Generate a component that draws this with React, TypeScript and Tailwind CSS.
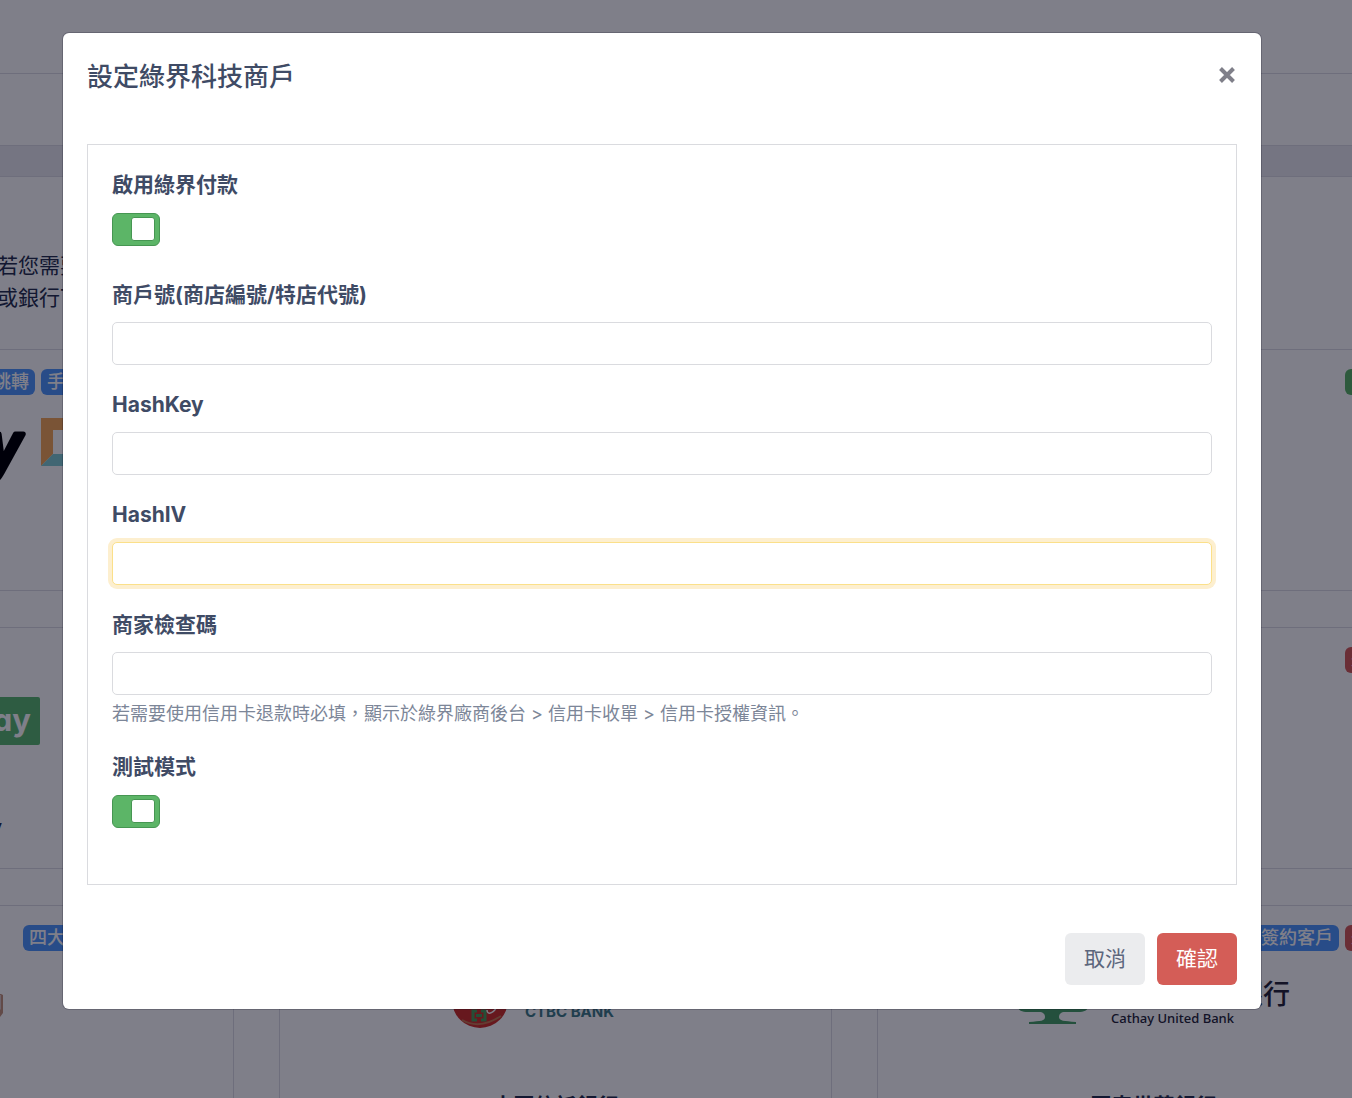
import type { ReactNode } from "react";

const badgeColors = {
  blue: "bg-[#5098fc]",
  green: "bg-[#5cb567]",
  red: "bg-[#d45c58]",
};

type Tag = { text: string; color: keyof typeof badgeColors };

type Provider = { name: string; tags: Tag[]; logo?: ReactNode };

function PayLogo() {
  return (
    <svg width="300" height="76" viewBox="0 0 300 76" aria-hidden="true">
      <text
        x="212"
        y="60"
        textAnchor="end"
        fontSize="64"
        fontWeight="600"
        fontStyle="italic"
        fontFamily="Open Sans, sans-serif"
        fill="#000"
        stroke="#000"
        strokeWidth="5"
        strokeLinejoin="round"
      >
        Pay
      </text>
      <path d="M233 10h48v12h-36v24l-12 12z" fill="#f4a858" />
      <path d="M233 58l12-12h36v12z" fill="#82cdd2" />
    </svg>
  );
}

function GreenPayLogo() {
  return (
    <svg width="164" height="70" viewBox="0 0 164 70" aria-hidden="true">
      <rect y="11" width="164" height="48" rx="2" fill="#5cb970" />
      <text
        x="155"
        y="45"
        textAnchor="end"
        fontSize="31"
        fontWeight="700"
        fontFamily="Inter, sans-serif"
        style={{ fontFeatureSettings: "'cv11'" }}
        fill="#fff"
      >
        Pay
      </text>
    </svg>
  );
}

function StoreLogo() {
  return (
    <svg width="90" height="70" viewBox="0 0 90 70" aria-hidden="true">
      <path d="M0 30h88l2 1v18l-3 4H0z" fill="#c4947c" />
      <path d="M0 31h88v14l-3 3H0z" fill="#d8c4c0" />
    </svg>
  );
}

function CtbcLogo() {
  return (
    <svg width="208" height="70" viewBox="0 0 208 70" aria-hidden="true">
      <circle cx="28" cy="36" r="28" fill="#ce3028" />
      <path d="M10 56q18 10 39-4" fill="none" stroke="#c87850" strokeWidth="2" />
      <path
        d="M25 47h-4v9h4M29 47h4v9h-4M24 51.500h6"
        fill="none"
        stroke="#4a9c5a"
        strokeWidth="3"
      />
      <path d="M35 46c0 6 8 3 11-6" fill="none" stroke="#fff" strokeWidth="1.500" />
      <text
        x="73"
        y="53"
        fontSize="15"
        fontWeight="700"
        fontFamily="Inter, sans-serif"
        fill="#407c88"
      >
        CTBC BANK
      </text>
    </svg>
  );
}

function CathayLogo() {
  return (
    <svg width="272" height="70" viewBox="0 0 272 70" aria-hidden="true">
      <path
        d="M35 8c18 0 35 16 35 35 0 3-4 5-10 5H47c-4 0-6 2-6 5 0 4 5 4 17 5v2H11v-2c12-1 16-1 16-5 0-3-2-5-6-5H10C4 48 0 46 0 43 0 24 16 8 35 8z"
        fill="#48a066"
      />
      <text
        x="272"
        y="40"
        textAnchor="end"
        fontSize="27"
        fontWeight="500"
        fontFamily="Noto Sans CJK TC, sans-serif"
        fill="#262638"
      >
        國泰世華銀行
      </text>
      <text
        x="93"
        y="59"
        fontSize="13"
        fontWeight="500"
        fontFamily="Noto Sans, sans-serif"
        fill="#262638"
      >
        Cathay United Bank
      </text>
    </svg>
  );
}

const providers: Provider[] = [
  {
    name: "歐付寶",
    tags: [
      { text: "網頁跳轉", color: "blue" },
      { text: "手機可跳轉", color: "blue" },
      { text: "已啟用", color: "green" },
    ],
    logo: <PayLogo />,
  },
  { name: "街口支付", tags: [{ text: "已啟用", color: "green" }] },
  { name: "藍新金流", tags: [{ text: "已啟用", color: "green" }] },
  { name: "LINE Pay", tags: [{ text: "未啟用", color: "red" }], logo: <GreenPayLogo /> },
  { name: "悠遊付", tags: [{ text: "未啟用", color: "red" }] },
  { name: "綠界科技", tags: [{ text: "未啟用", color: "red" }] },
  {
    name: "超商代收",
    tags: [
      { text: "四大超商代收", color: "blue" },
      { text: "未啟用", color: "red" },
    ],
    logo: <StoreLogo />,
  },
  { name: "中國信託銀行", tags: [{ text: "未啟用", color: "red" }], logo: <CtbcLogo /> },
  {
    name: "國泰世華銀行",
    tags: [
      { text: "需簽約客戶", color: "blue" },
      { text: "未啟用", color: "red" },
    ],
    logo: <CathayLogo />,
  },
];

function ProviderCard({ name, tags, logo }: Provider) {
  return (
    <div className="flex h-[242px] flex-col items-center border border-[#dcdde4] px-[18px] pt-[19px]">
      <div className="flex w-full justify-end gap-1.5">
        {tags.map((tag) => (
          <span
            key={tag.text}
            className={`h-[26px] shrink-0 rounded-md px-1.5 text-lg leading-[26px] font-medium text-white ${badgeColors[tag.color]}`}
          >
            {tag.text}
          </span>
        ))}
      </div>
      <div className="mt-[13px] h-[70px]">{logo}</div>
      <h3 className="mt-14 text-[21px] leading-8 font-semibold">{name}</h3>
    </div>
  );
}

function PageBehind() {
  return (
    <div className="-mr-[78px] -ml-[319px] text-[21px] leading-8 text-[#26304e]">
      <div className="h-[74px] border-b border-[#dcdde4]" />
      <div className="h-[72px] border-b border-[#dcdde4]" />
      <div className="h-[31px] border-b border-[#dcdde4] bg-[#eaeaf0]" />
      <p className="pt-[73px] pb-[35px] pl-[316px]">
        若您需要申請金流服務，
        <br />
        或銀行TSP服務，請洽客服人員。
      </p>
      <div className="grid grid-cols-3 gap-x-[45px] gap-y-9">
        {providers.map((provider) => (
          <ProviderCard key={provider.name} {...provider} />
        ))}
      </div>
    </div>
  );
}

function Switch({ id, label }: { id: string; label: string }) {
  return (
    <div className="flex flex-col items-start gap-3">
      <label htmlFor={id} className="text-[21px] leading-8 font-bold">
        {label}
      </label>
      <input
        id={id}
        type="checkbox"
        role="switch"
        defaultChecked
        className="h-[33px] w-12 appearance-none rounded-md border border-[#469652] bg-[#ebecee] before:mt-[3px] before:block before:size-6 before:rounded-[3px] before:border before:border-[#469652] before:bg-white before:content-[''] checked:bg-[#5cb567] checked:before:ml-[18px]"
      />
    </div>
  );
}

type FieldProps = { id: string; label: string; hint?: string; active?: boolean };

function Field({ id, label, hint, active }: FieldProps) {
  return (
    <div>
      <label htmlFor={id} className="block text-[21px] leading-8 font-bold">
        {label}
      </label>
      <input
        id={id}
        type="text"
        aria-describedby={hint ? `${id}-hint` : undefined}
        className={`mt-[11px] block h-[43px] w-full rounded-[5px] border bg-white px-3 text-[21px] outline-none ${
          active ? "border-[#fbe08a] ring-4 ring-[#fdefcf]" : "border-[#dadbdf]"
        }`}
      />
      {hint && (
        <p id={`${id}-hint`} className="mt-1.5 text-lg leading-[26px] text-[#7c8698]">
          {hint}
        </p>
      )}
    </div>
  );
}

export default function App() {
  return (
    <div className="relative h-screen overflow-hidden bg-white font-['Inter','Noto_Sans_CJK_TC',sans-serif]">
      <PageBehind />

      <div className="absolute inset-0 overflow-hidden bg-[#000014]/50 pt-[33px] pr-[91px] pl-[63px]">
        <div
          role="dialog"
          aria-modal="true"
          aria-labelledby="dialog-title"
          className="rounded-md bg-white p-6 text-[#3f4b65] ring-1 ring-[#000014]/20"
        >
          <div className="flex items-start justify-between">
            <h2 id="dialog-title" className="text-[26px] leading-10 font-medium">
              設定綠界科技商戶
            </h2>
            <button type="button" aria-label="關閉" className="mt-2 text-[#7f7f89]">
              <svg width="20" height="20" viewBox="0 0 20 20" aria-hidden="true">
                <path
                  d="M3.500 3.500l13 13M16.500 3.500l-13 13"
                  stroke="currentColor"
                  strokeWidth="4"
                />
              </svg>
            </button>
          </div>

          <form id="merchant" className="mt-[47px] border border-[#dadbdf] px-6 pt-6 pb-14">
            <Switch id="enabled" label="啟用綠界付款" />
            <div className="mt-[33px] flex flex-col gap-6">
              <Field id="merchant-id" label="商戶號(商店編號/特店代號)" />
              <Field id="hash-key" label="HashKey" />
              <Field id="hash-iv" label="HashIV" active />
              <Field
                id="check-code"
                label="商家檢查碼"
                hint="若需要使用信用卡退款時必填，顯示於綠界廠商後台 > 信用卡收單 > 信用卡授權資訊。"
              />
              <Switch id="test-mode" label="測試模式" />
            </div>
          </form>

          <div className="mt-12 flex justify-end gap-3 text-[21px]">
            <button type="button" className="h-[52px] w-20 rounded-md bg-[#ebecee] text-[#5c667c]">
              取消
            </button>
            <button
              type="submit"
              form="merchant"
              className="h-[52px] w-20 rounded-md bg-[#d45d57] text-white"
            >
              確認
            </button>
          </div>
        </div>
      </div>
    </div>
  );
}
